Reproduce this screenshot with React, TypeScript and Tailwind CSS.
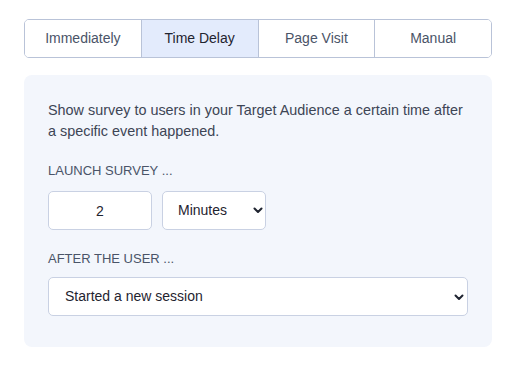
import { useState } from 'react';

const TRIGGERS = ['Immediately', 'Time Delay', 'Page Visit', 'Manual'];

function Chevron() {
  return (
    <svg width="10" height="7" viewBox="0 0 10 7" aria-hidden="true" className="pointer-events-none">
      <path d="M1.5 1.5 L5 5 L8.5 1.5" fill="none" stroke="#1f2430" strokeWidth="2" strokeLinecap="round" strokeLinejoin="round" />
    </svg>
  );
}

export default function App() {
  const [active, setActive] = useState('Time Delay');
  const [delay, setDelay] = useState('2');

  return (
    <div className="min-h-[370px] w-[521px] bg-white pl-6 pt-[19px] font-['Liberation_Sans',Arial,sans-serif] text-[#374151]">
      <div className="w-[468px]">
        {/* Trigger type tabs */}
        <div className="flex h-[39px] overflow-hidden rounded-[5px] border border-[#b9c3d8]">
          {TRIGGERS.map((t, i) => (
            <button
              key={t}
              onClick={() => setActive(t)}
              className={`flex-1 text-[14px] ${i > 0 ? 'border-l border-[#b9c3d8]' : ''} ${
                active === t ? 'bg-[#e3ebfc] text-[#1f2430]' : 'bg-white text-[#4a5468]'
              }`}
            >
              {t}
            </button>
          ))}
        </div>

        {/* Settings panel */}
        <div className="mt-[17px] rounded-lg bg-[#f3f6fc] px-6 pb-[31px] pt-[25px]">
          <p className="text-[14.4px] leading-[21px] text-[#3d4555]">
            Show survey to users in your Target Audience a certain time after a specific event happened.
          </p>

          <div className="mt-[21px] text-[13px] uppercase leading-4 text-[#4a5468]">Launch survey ...</div>
          <div className="mt-[12px] flex gap-[10px]">
            <input
              value={delay}
              onChange={(e) => setDelay(e.target.value)}
              className="h-[39px] w-[104px] rounded-[5px] border border-[#c9d1e3] bg-white text-center text-[14px] text-[#1f2430] outline-none"
            />
            <div className="relative flex h-[39px] w-[104px] items-center rounded-[5px] border border-[#c9d1e3] bg-white">
              <select className="h-full w-full appearance-none bg-transparent pl-[15px] text-[14px] text-[#1f2430] outline-none">
                <option>Minutes</option>
                <option>Seconds</option>
                <option>Hours</option>
              </select>
              <span className="absolute right-[2px] top-[15px]">
                <Chevron />
              </span>
            </div>
          </div>

          <div className="mt-[21px] text-[13px] uppercase leading-4 text-[#4a5468]">After the user ...</div>
          <div className="relative mt-[10px] flex h-[39px] items-center rounded-[5px] border border-[#c9d1e3] bg-white">
            <select className="h-full w-full appearance-none bg-transparent pl-4 text-[14px] text-[#1f2430] outline-none">
              <option>Started a new session</option>
              <option>Visited a page</option>
            </select>
            <span className="absolute right-[3px] top-[16px]">
              <Chevron />
            </span>
          </div>
        </div>
      </div>
    </div>
  );
}
